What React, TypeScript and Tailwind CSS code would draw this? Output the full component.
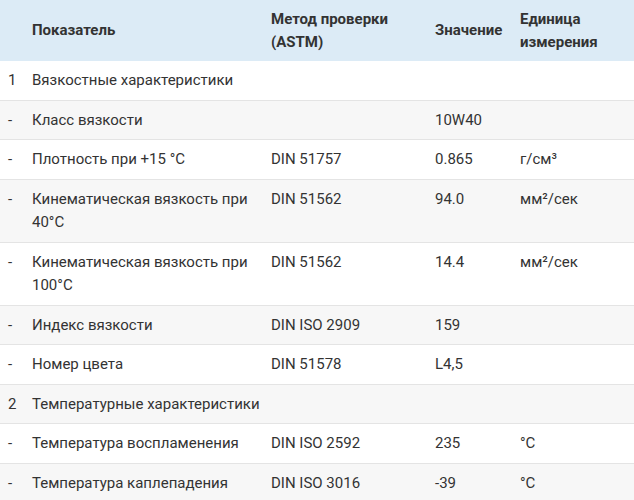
import React from "react";

type Row = { n: string; name: string; method: string; value: string; unit: React.ReactNode; tall?: boolean };

const rows: Row[] = [
  { n: "1", name: "Вязкостные характеристики", method: "", value: "", unit: "" },
  { n: "-", name: "Класс вязкости", method: "", value: "10W40", unit: "" },
  { n: "-", name: "Плотность при +15 °C", method: "DIN 51757", value: "0.865", unit: "г/см³" },
  { n: "-", name: "Кинематическая вязкость при 40°C", method: "DIN 51562", value: "94.0", unit: "мм²/сек", tall: true },
  { n: "-", name: "Кинематическая вязкость при 100°C", method: "DIN 51562", value: "14.4", unit: "мм²/сек", tall: true },
  { n: "-", name: "Индекс вязкости", method: "DIN ISO 2909", value: "159", unit: "" },
  { n: "-", name: "Номер цвета", method: "DIN 51578", value: "L4,5", unit: "" },
  { n: "2", name: "Температурные характеристики", method: "", value: "", unit: "" },
  { n: "-", name: "Температура воспламенения", method: "DIN ISO 2592", value: "235", unit: "°C" },
  { n: "-", name: "Температура каплепадения", method: "DIN ISO 3016", value: "-39", unit: "°C" },
];

export default function App() {
  return (
    <div className="w-[634px] h-[500px] overflow-hidden bg-white">
      <table
        className="w-[634px] border-collapse table-fixed text-[15px] leading-[1.5] text-[#333333]"
        style={{ fontFamily: "Roboto, 'Noto Sans', sans-serif" }}
      >
        <colgroup>
          <col className="w-[24px]" />
          <col className="w-[239px]" />
          <col className="w-[164px]" />
          <col className="w-[85px]" />
          <col className="w-[122px]" />
        </colgroup>
        <thead>
          <tr className="bg-[#dcebf6] font-bold">
            <th className="py-2"></th>
            <th className="py-2 pl-2 text-left align-middle">Показатель</th>
            <th className="py-2 pl-2 text-left align-middle">Метод проверки (ASTM)</th>
            <th className="py-2 pl-2 text-left align-middle">Значение</th>
            <th className="py-2 pl-2 text-left align-middle">Единица измерения</th>
          </tr>
        </thead>
        <tbody>
          {rows.map((r, i) => (
            <tr
              key={i}
              className={(i % 2 === 1 ? "bg-[#f7f7f7]" : "bg-white") + " border-b border-[#e4e4e4]"}
            >
              <td className="py-2 pl-2 align-top">{r.n}</td>
              <td className={"py-2 pl-2 align-top" + (r.tall ? " leading-[23px]" : "")}>{r.name}</td>
              <td className="py-2 pl-2 align-top">{r.method}</td>
              <td className="py-2 pl-2 align-top">{r.value}</td>
              <td className="py-2 pl-2 align-top">{r.unit}</td>
            </tr>
          ))}
        </tbody>
      </table>
    </div>
  );
}
